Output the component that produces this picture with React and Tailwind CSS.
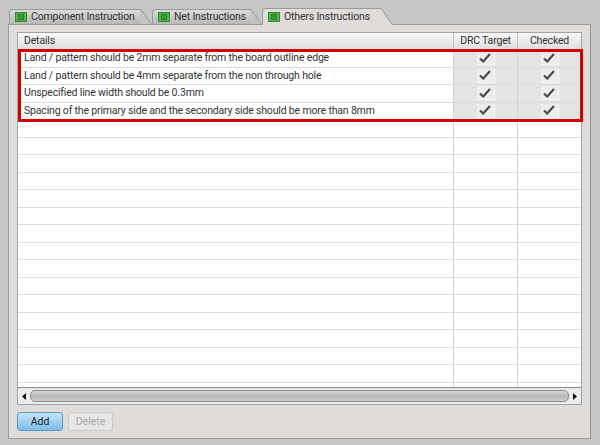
import React from 'react';

const details = [
  'Land / pattern should be 2mm separate from the board outline edge',
  'Land / pattern should be 4mm separate from the non through hole',
  'Unspecified line width should be 0.3mm',
  'Spacing of the primary side and the secondary side should be more than 8mm',
];

const emptyRows = Array.from({ length: 16 }, (_, i) => i);

const TabIcon = () => (
  <span className="w-[12px] h-[10px] bg-[#4cb84c] border border-[#2c8a2c] flex items-center justify-center shrink-0">
    <span className="w-[6px] h-[6px] bg-[#3a9a3a] border border-[#2f7f2f]" />
  </span>
);

const Slant = ({ fill, height, width }) => (
  <svg width={width} height={height} viewBox={`0 0 ${width} ${height}`} className="shrink-0">
    <path d={`M0 0 L1 0 L${width} ${height} L0 ${height} Z`} fill={fill} />
    <path d={`M0 0.5 L1 0.5 L${width - 0.5} ${height}`} fill="none" stroke="#9a9a9a" />
  </svg>
);

const Tab = ({ label, active, width, slant }) => (
  <div className={`flex items-end ${active ? 'h-[17px] z-10' : 'h-[15px] mt-[1px]'}`}>
    <div
      className={`h-full flex items-center gap-[4px] pl-[5px] rounded-tl-[4px] border-l border-t border-[#9a9a9a] ${active ? 'bg-[#e0dcda]' : 'bg-gradient-to-b from-[#dcdcdc] to-[#b8b8b8]'}`}
      style={{ width }}
    >
      <TabIcon />
      <span className="text-[10.5px] leading-[14px] tracking-[-0.17px] text-[#333] whitespace-nowrap">{label}</span>
    </div>
    <Slant fill={active ? '#e0dcda' : '#c4c4c4'} height={active ? 17 : 15} width={slant} />
  </div>
);

const Check = () => (
  <span className="w-[18px] h-[14px] bg-[#ececec] border-r border-b border-[#f8f8f8] flex items-center justify-center">
    <svg width="12" height="10" viewBox="0 0 12 10">
      <path d="M1 5.5 L4.2 8.5 L11 1" fill="none" stroke="#4a4a4a" strokeWidth="2.2" />
    </svg>
  </span>
);

const Row = ({ text, checked }) => (
  <div className="flex h-[17.5px] border-b border-[#dcdcdc]">
    <div className="flex-1 pl-[6px] text-[10.5px] leading-[16px] tracking-[-0.17px] text-[#333] whitespace-nowrap overflow-hidden">{text}</div>
    <div className={`w-[64px] border-l border-[#d4d4d4] flex items-center justify-center ${checked ? 'bg-[#e4e4e4]' : ''}`}>
      {checked && <Check />}
    </div>
    <div className={`w-[64px] border-l border-[#d4d4d4] flex items-center justify-center ${checked ? 'bg-[#e4e4e4]' : ''}`}>
      {checked && <Check />}
    </div>
  </div>
);

export default function App() {
  return (
    <div className="w-[600px] h-[445px] bg-[#c6c6c6] overflow-hidden flex flex-col pl-[8px] pr-[9px] pt-[8px] pb-[6px] font-['Roboto','Liberation_Sans',sans-serif]">
      <div className="flex h-[16px] shrink-0 pl-[1px]">
        <Tab label="Component Instruction" width={131} slant={12} />
        <Tab label="Net Instructions" width={98} slant={12} />
        <Tab label="Others Instructions" active width={118} slant={13} />
      </div>
      <div className="flex-1 bg-[#e0dcda] border border-[#9a9a9a] flex flex-col pl-[8px] pr-[8px] pt-[7px]">
        <div className="relative h-[373px] border border-[#a0a4a8] bg-white flex flex-col">
          <div className="flex h-[17px] shrink-0 bg-gradient-to-b from-[#f8f8f8] to-[#dcdcdc] text-[10.5px] leading-[16px] tracking-[-0.17px] text-[#333]">
            <div className="flex-1 pl-[6px]">Details</div>
            <div className="w-[64px] border-l border-[#c0c0c0] text-center">DRC Target</div>
            <div className="w-[64px] border-l border-[#c0c0c0] text-center">Checked</div>
          </div>
          <div className="flex-1 overflow-hidden">
            {details.map((d) => (
              <Row key={d} text={d} checked />
            ))}
            {emptyRows.map((i) => (
              <Row key={i} text="" />
            ))}
          </div>
          <div className="h-[17px] shrink-0 bg-[#ececec] border-t border-[#8a8a8a] flex items-center">
            <svg width="12" height="9" viewBox="0 0 12 9" className="shrink-0">
              <path d="M4 4.5 L8 1 L8 8 Z" fill="#111" />
            </svg>
            <div className="flex-1 h-[12px] rounded-[5px] border border-[#8c8c8c] bg-gradient-to-b from-[#dadada] via-[#b4b8b4] to-[#d0d0d0]" />
            <svg width="12" height="9" viewBox="0 0 12 9" className="shrink-0">
              <path d="M8 4.5 L4 1 L4 8 Z" fill="#111" />
            </svg>
          </div>
          <div className="absolute left-0 top-[16px] w-[565px] h-[73px] border-[3px] border-[#d40000] pointer-events-none" />
        </div>
        <div className="flex gap-[5px] mt-[7px]">
          <button className="w-[46px] h-[19px] rounded-[3px] border border-[#5a9bc8] bg-gradient-to-b from-[#c4e4f8] to-[#7cbce8] text-[10.5px] leading-[16px] text-[#222]">Add</button>
          <button className="w-[45px] h-[19px] rounded-[3px] border border-[#c8c8c8] bg-[#e6e6e6] text-[10.5px] leading-[16px] text-[#aaa]">Delete</button>
        </div>
      </div>
    </div>
  );
}
